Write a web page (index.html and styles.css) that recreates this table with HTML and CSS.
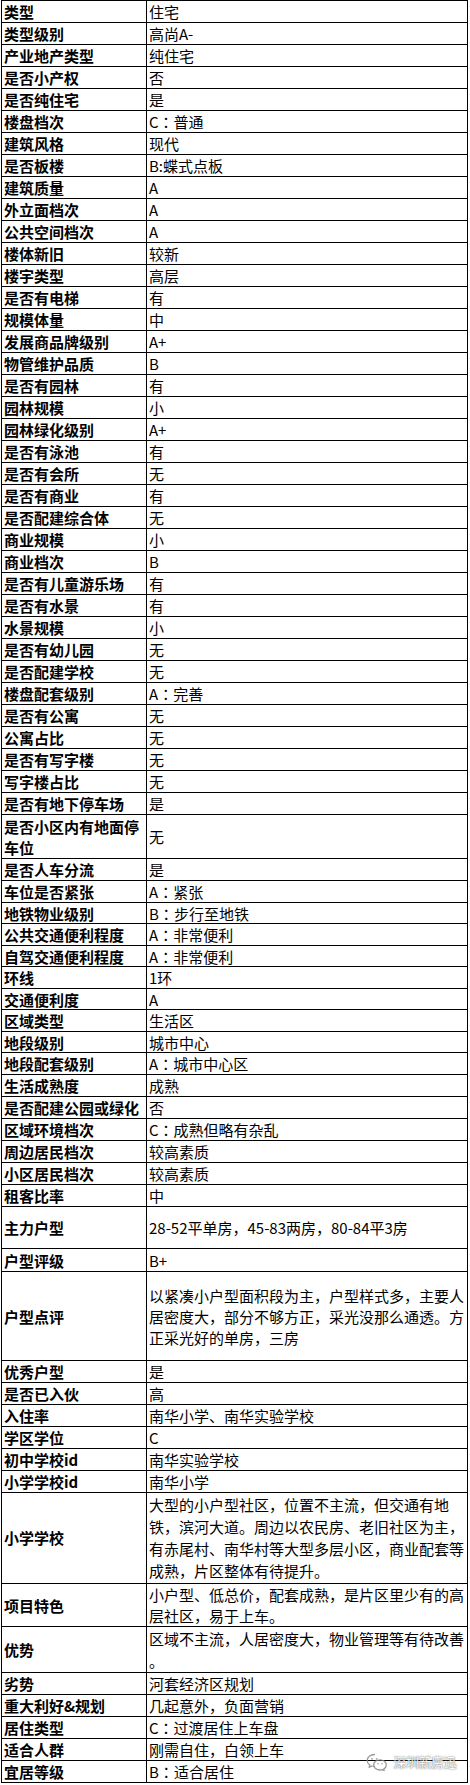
FILE: index.html
```html
<!DOCTYPE html>
<html lang="zh-CN">
<head>
<meta charset="utf-8">
<title>楼盘信息</title>
<link rel="stylesheet" href="styles.css">
</head>
<body>
<div class="page">
<table class="sheet">
<colgroup><col class="c-label"><col class="c-value"></colgroup>
<tbody>
<tr><th>类型</th><td>住宅</td></tr>
<tr><th>类型级别</th><td>高尚A-</td></tr>
<tr><th>产业地产类型</th><td>纯住宅</td></tr>
<tr><th>是否小产权</th><td>否</td></tr>
<tr><th>是否纯住宅</th><td>是</td></tr>
<tr><th>楼盘档次</th><td>C<span class="colon" lang="zh-TW">：</span>普通</td></tr>
<tr><th>建筑风格</th><td>现代</td></tr>
<tr><th>是否板楼</th><td>B:蝶式点板</td></tr>
<tr><th>建筑质量</th><td>A</td></tr>
<tr><th>外立面档次</th><td>A</td></tr>
<tr><th>公共空间档次</th><td>A</td></tr>
<tr><th>楼体新旧</th><td>较新</td></tr>
<tr><th>楼宇类型</th><td>高层</td></tr>
<tr><th>是否有电梯</th><td>有</td></tr>
<tr><th>规模体量</th><td>中</td></tr>
<tr><th>发展商品牌级别</th><td>A+</td></tr>
<tr><th>物管维护品质</th><td>B</td></tr>
<tr><th>是否有园林</th><td>有</td></tr>
<tr><th>园林规模</th><td>小</td></tr>
<tr><th>园林绿化级别</th><td>A+</td></tr>
<tr><th>是否有泳池</th><td>有</td></tr>
<tr><th>是否有会所</th><td>无</td></tr>
<tr><th>是否有商业</th><td>有</td></tr>
<tr><th>是否配建综合体</th><td>无</td></tr>
<tr><th>商业规模</th><td>小</td></tr>
<tr><th>商业档次</th><td>B</td></tr>
<tr><th>是否有儿童游乐场</th><td>有</td></tr>
<tr><th>是否有水景</th><td>有</td></tr>
<tr><th>水景规模</th><td>小</td></tr>
<tr><th>是否有幼儿园</th><td>无</td></tr>
<tr><th>是否配建学校</th><td>无</td></tr>
<tr><th>楼盘配套级别</th><td>A<span class="colon" lang="zh-TW">：</span>完善</td></tr>
<tr><th>是否有公寓</th><td>无</td></tr>
<tr><th>公寓占比</th><td>无</td></tr>
<tr><th>是否有写字楼</th><td>无</td></tr>
<tr><th>写字楼占比</th><td>无</td></tr>
<tr><th>是否有地下停车场</th><td>是</td></tr>
<tr class="h44"><th>是否小区内有地面停车位</th><td>无</td></tr>
<tr><th>是否人车分流</th><td>是</td></tr>
<tr><th>车位是否紧张</th><td>A<span class="colon" lang="zh-TW">：</span>紧张</td></tr>
<tr class="h21"><th>地铁物业级别</th><td>B<span class="colon" lang="zh-TW">：</span>步行至地铁</td></tr>
<tr><th>公共交通便利程度</th><td>A<span class="colon" lang="zh-TW">：</span>非常便利</td></tr>
<tr class="h21"><th>自驾交通便利程度</th><td>A<span class="colon" lang="zh-TW">：</span>非常便利</td></tr>
<tr><th>环线</th><td>1环</td></tr>
<tr class="h21"><th>交通便利度</th><td>A</td></tr>
<tr><th>区域类型</th><td>生活区</td></tr>
<tr class="h21"><th>地段级别</th><td>城市中心</td></tr>
<tr><th>地段配套级别</th><td>A<span class="colon" lang="zh-TW">：</span>城市中心区</td></tr>
<tr><th>生活成熟度</th><td>成熟</td></tr>
<tr><th>是否配建公园或绿化</th><td>否</td></tr>
<tr><th>区域环境档次</th><td>C<span class="colon" lang="zh-TW">：</span>成熟但略有杂乱</td></tr>
<tr><th>周边居民档次</th><td>较高素质</td></tr>
<tr><th>小区居民档次</th><td>较高素质</td></tr>
<tr><th>租客比率</th><td>中</td></tr>
<tr class="h42"><th>主力户型</th><td>28-52平单房，45-83两房，80-84平3房</td></tr>
<tr class="h23"><th>户型评级</th><td>B+</td></tr>
<tr class="h89"><th>户型点评</th><td>以紧凑小户型面积段为主，户型样式多，主要人居密度大，部分不够方正，采光没那么通透。方正采光好的单房，三房</td></tr>
<tr><th>优秀户型</th><td>是</td></tr>
<tr><th>是否已入伙</th><td>高</td></tr>
<tr><th>入住率</th><td>南华小学、南华实验学校</td></tr>
<tr><th>学区学位</th><td>C</td></tr>
<tr><th>初中学校id</th><td>南华实验学校</td></tr>
<tr><th>小学学校id</th><td>南华小学</td></tr>
<tr class="h91"><th>小学学校</th><td>大型的小户型社区，位置不主流，但交通有地铁，滨河大道。周边以农民房、老旧社区为主，有赤尾村、南华村等大型多层小区，商业配套等成熟，片区整体有待提升。</td></tr>
<tr class="h43"><th>项目特色</th><td>小户型、低总价，配套成熟，是片区里少有的高层社区，易于上车。</td></tr>
<tr class="h46"><th>优势</th><td>区域不主流，人居密度大，物业管理等有待改善<br>。</td></tr>
<tr><th>劣势</th><td>河套经济区规划</td></tr>
<tr><th>重大利好&amp;规划</th><td>几起意外，负面营销</td></tr>
<tr><th>居住类型</th><td>C<span class="colon" lang="zh-TW">：</span>过渡居住上车盘</td></tr>
<tr><th>适合人群</th><td>刚需自住，白领上车</td></tr>
<tr><th>宜居等级</th><td>B<span class="colon" lang="zh-TW">：</span>适合居住</td></tr>
</tbody>
</table>
<div class="watermark">
<svg class="wm-icon" width="22" height="18" viewBox="0 0 22 18" aria-hidden="true">
<path d="M8.5 1.5C4.4 1.5 1.2 4.2 1.2 7.5c0 1.9 1 3.5 2.6 4.6l-.7 2.2 2.6-1.3c.9.3 1.8.4 2.8.4" fill="none" stroke="#8a8a8a" stroke-width="1.3" stroke-linecap="round" stroke-linejoin="round"/>
<path d="M14 6.8c-3.6 0-6.3 2.3-6.3 5.1s2.7 5.1 6.3 5.1c.8 0 1.5-.1 2.2-.3l2.1 1.1-.5-1.9c1.5-.9 2.5-2.3 2.5-4 0-2.8-2.8-5.1-6.3-5.1z" fill="none" stroke="#8a8a8a" stroke-width="1.3" stroke-linejoin="round"/>
<circle cx="6" cy="5.8" r=".9" fill="#8a8a8a"/><circle cx="10.6" cy="5.8" r=".9" fill="#8a8a8a"/>
<circle cx="12" cy="10.8" r=".75" fill="#8a8a8a"/><circle cx="16" cy="10.8" r=".75" fill="#8a8a8a"/>
</svg>
<span class="wm-text">深圳新房迅</span>
</div>
</div>
</body>
</html>
```

FILE: styles.css
```css
html, body {
  margin: 0;
  padding: 0;
  background: #ffffff;
}

.page {
  position: relative;
  width: 470px;
  padding: 0 0 0 1px;
  box-sizing: border-box;
}

.sheet {
  border-collapse: collapse;
  table-layout: fixed;
  width: 466px;
  font-family: "Noto Sans CJK SC", "Noto Sans", sans-serif;
  font-size: 15px;
  color: #000;
}

.c-label { width: 145px; }
.c-value { width: 321px; }

.sheet th,
.sheet td {
  border: 1px solid #000;
  height: 22px;
  padding: 0 1px 0 2px;
  line-height: 19px;
  vertical-align: middle;
  text-align: left;
  box-sizing: border-box;
}

.sheet th {
  font-weight: 700;
}

.sheet td {
  font-weight: 400;
}

.colon {
  font-family: "Noto Sans CJK TC", "Noto Sans CJK SC", sans-serif;
}

.sheet tr.h21 th, .sheet tr.h21 td { height: 21px; }
.sheet tr.h44 th, .sheet tr.h44 td { height: 44px; line-height: 21px; }
.sheet tr.h42 th, .sheet tr.h42 td { height: 42px; }
.sheet tr.h23 th, .sheet tr.h23 td { height: 23px; }
.sheet tr.h89 th, .sheet tr.h89 td { height: 89px; line-height: 21px; }
.sheet tr.h91 th, .sheet tr.h91 td { height: 91px; line-height: 22px; }
.sheet tr.h43 th, .sheet tr.h43 td { height: 43px; line-height: 21px; }
.sheet tr.h46 th, .sheet tr.h46 td { height: 46px; line-height: 22px; }

.watermark {
  position: absolute;
  right: 14px;
  bottom: 12px;
  display: flex;
  align-items: center;
  gap: 5px;
  opacity: 0.85;
}

.wm-text {
  font-family: "Noto Sans CJK SC", sans-serif;
  font-size: 13px;
  color: #ffffff;
  text-shadow: 0 0 1px #555, 0 0 2px #777;
  letter-spacing: -0.5px;
}
```
